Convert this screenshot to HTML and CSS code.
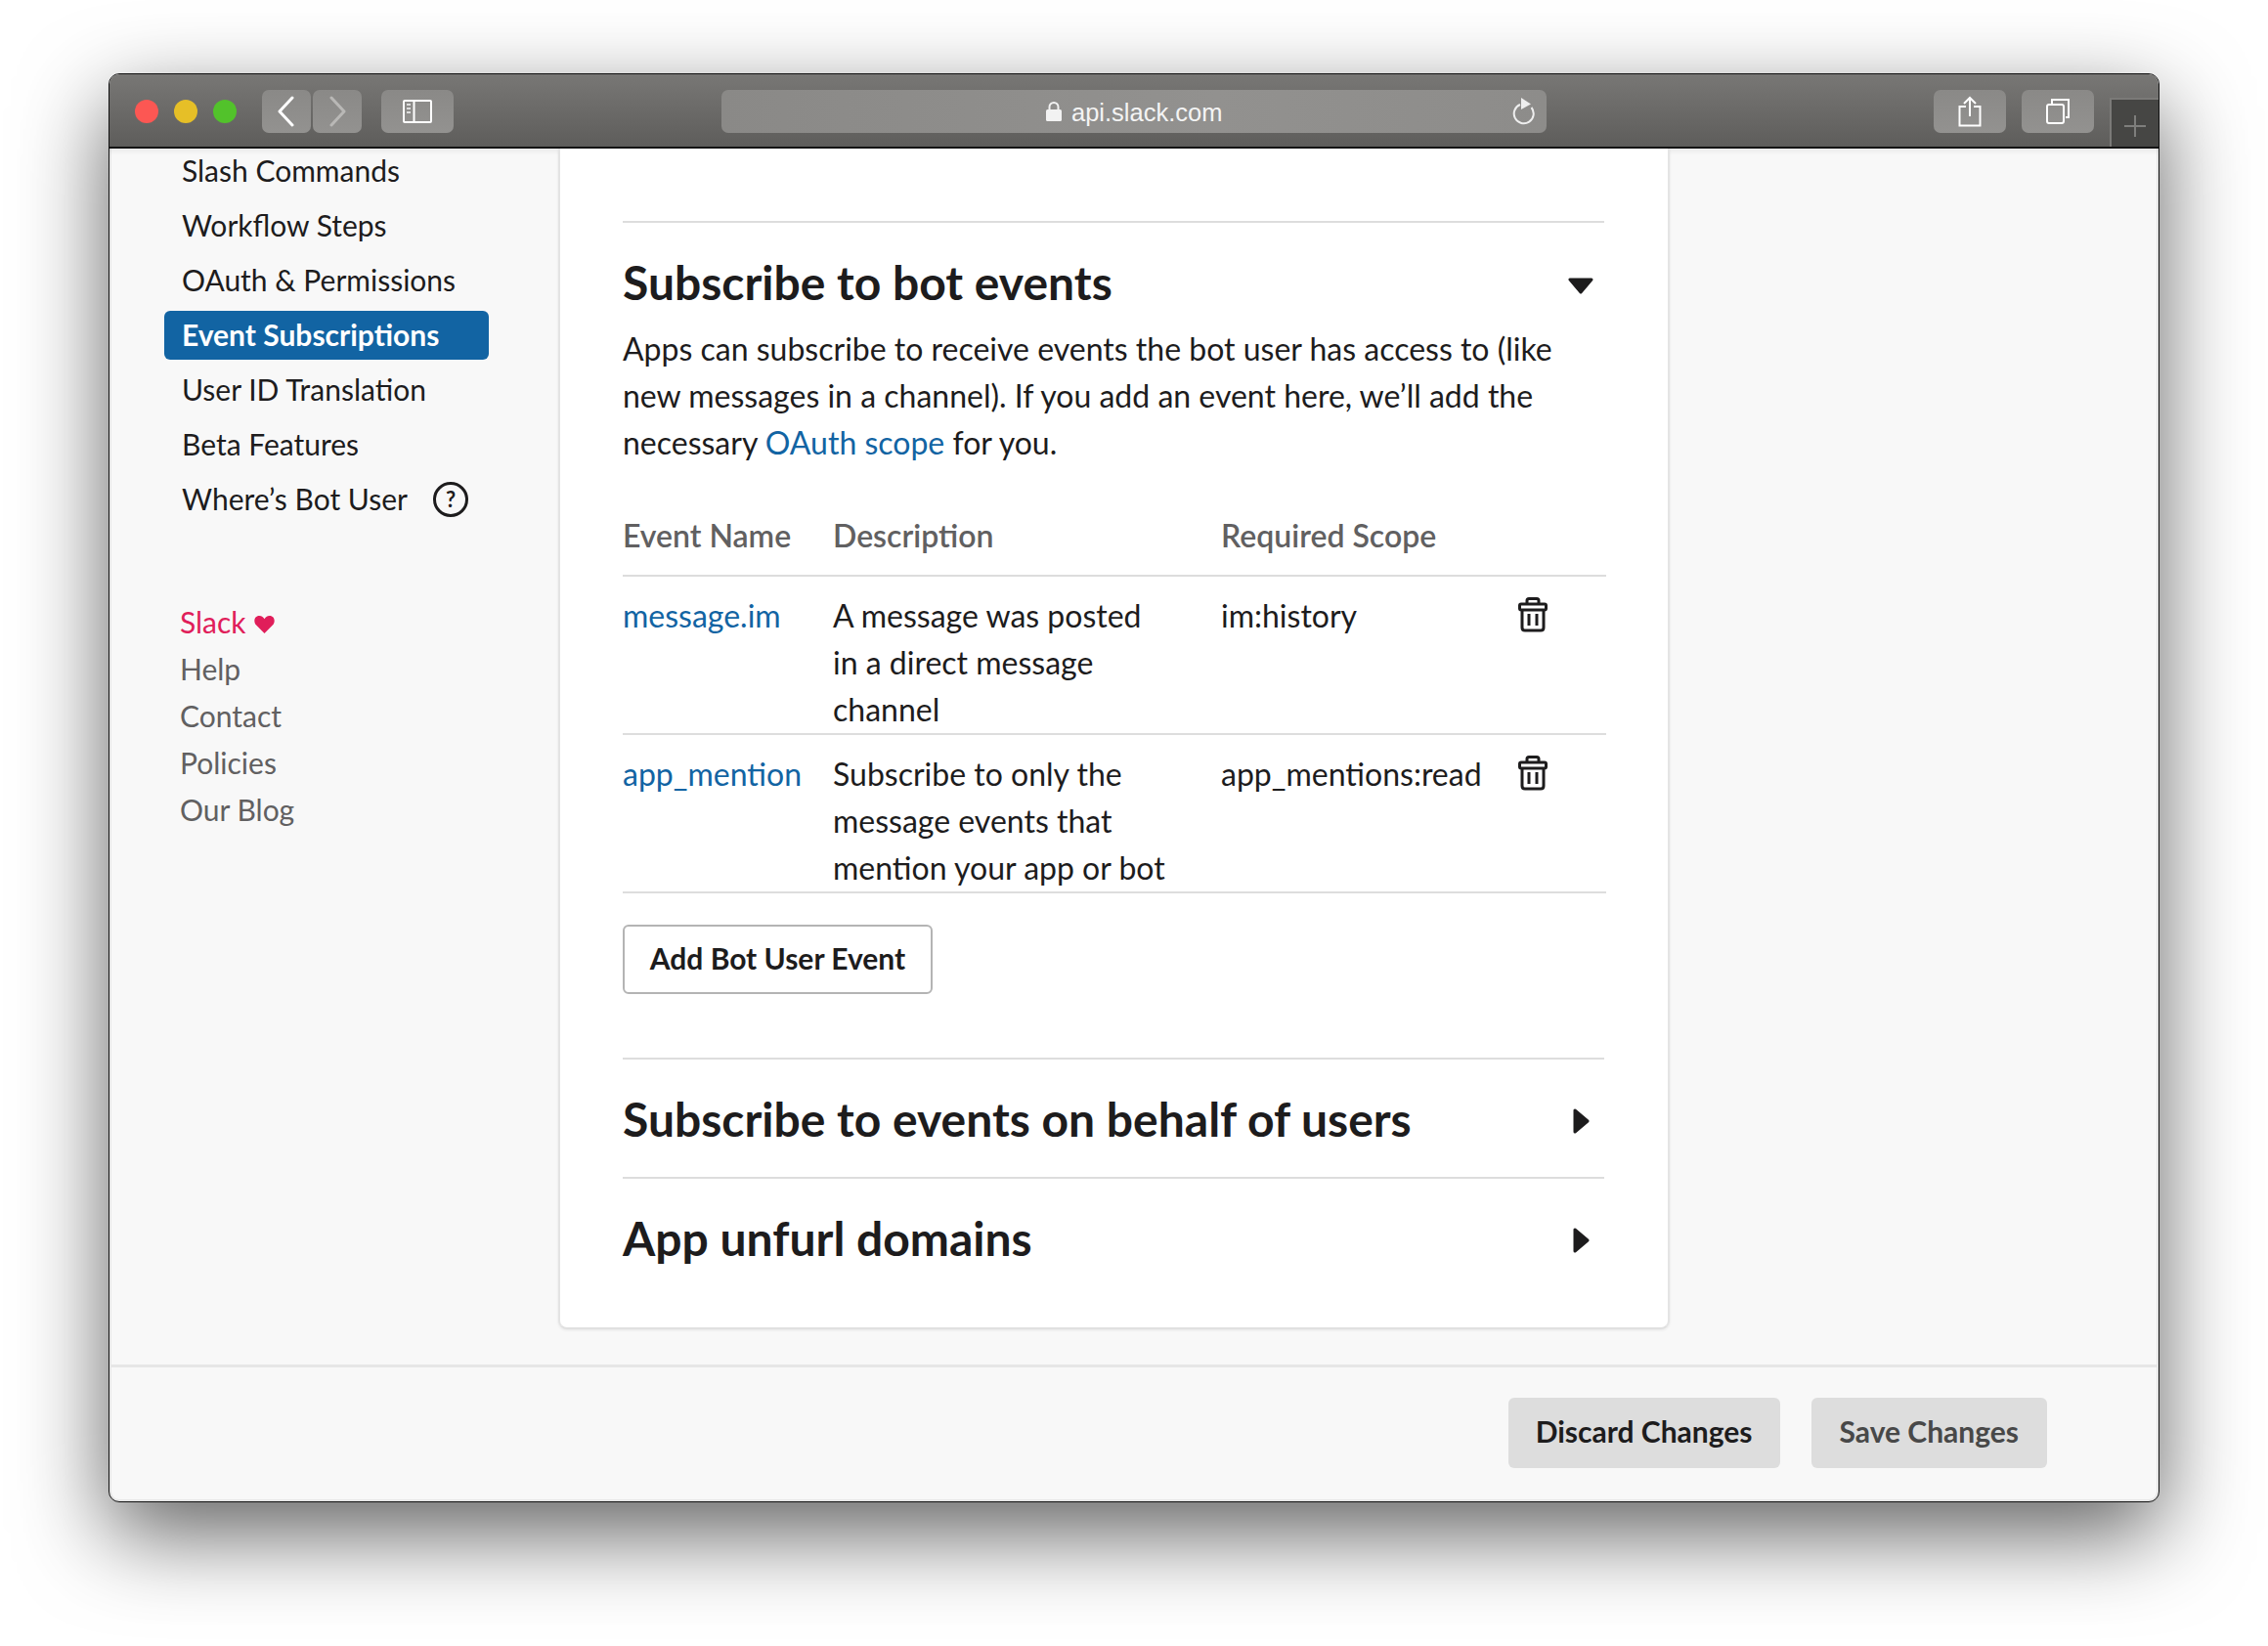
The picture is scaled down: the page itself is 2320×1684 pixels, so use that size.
FILE: index.html
```html
<!DOCTYPE html>
<html lang="en">
<head>
    <meta charset="UTF-8">
    <title>Event Subscriptions | Slack</title>
    <link rel="stylesheet" href="styles.css">
</head>
<body>
    <div class="window">
        <header class="titlebar">
            <div class="lights">
                <span class="light red"></span>
                <span class="light yellow"></span>
                <span class="light green"></span>
            </div>
            <div class="nav-btns">
                <div class="tool-btn nav-btn">
                    <svg width="20" height="32" viewBox="0 0 20 32"><path d="M16 2 3 16l13 14" fill="none" stroke="#fff" stroke-width="3" stroke-linecap="round" stroke-linejoin="round"/></svg>
                </div>
                <div class="tool-btn nav-btn">
                    <svg width="20" height="32" viewBox="0 0 20 32"><path d="M4 2l13 14L4 30" fill="none" stroke="#b9b8b6" stroke-width="3" stroke-linecap="round" stroke-linejoin="round"/></svg>
                </div>
            </div>
            <div class="tool-btn sidebar-btn">
                <svg width="30" height="24" viewBox="0 0 30 24"><rect x="1" y="1" width="28" height="22" rx="1" fill="none" stroke="#fff" stroke-width="2"/><path d="M11.500 1v22" stroke="#fff" stroke-width="2"/><path d="M4 5h4M4 9h4M4 13h4" stroke="#ddd" stroke-width="2"/></svg>
            </div>
            <div class="urlbar">
                <div class="url">
                    <svg class="lock" width="16" height="20" viewBox="0 0 16 20"><path d="M3.500 9V5.500a4.500 4.500 0 0 1 9 0V9" fill="none" stroke="#f2f2f2" stroke-width="2"/><rect y="8" width="16" height="12" rx="1.500" fill="#f2f2f2"/></svg>
                    <span class="host">api.slack.com</span>
                </div>
                <svg class="reload" width="24" height="28" viewBox="0 0 24 28"><path d="M9 7a10 10 0 1 0 11.500 3" fill="none" stroke="#eee" stroke-width="2"/><path d="M10 0l10 6.500-10 5.500z" fill="#eee"/></svg>
            </div>
            <div class="tool-btn wide-btn share-btn">
                <svg width="24" height="32" viewBox="0 0 24 32"><path d="M8 11H1.500v19.500h21V11H16" fill="none" stroke="#fff" stroke-width="2"/><path d="M12 21V2M6 8l6-6 6 6" fill="none" stroke="#fff" stroke-width="2"/></svg>
            </div>
            <div class="tool-btn wide-btn">
                <svg width="24" height="26" viewBox="0 0 24 26"><rect x="1" y="6" width="17" height="19" rx="2" fill="none" stroke="#fff" stroke-width="2"/><path d="M6 5V1h17v18h-3" fill="none" stroke="#fff" stroke-width="2"/></svg>
            </div>
            <div class="new-tab">
                <svg width="22" height="22" viewBox="0 0 22 22"><path d="M11 0v22M0 11h22" stroke="#7e7e7c" stroke-width="2"/></svg>
            </div>
        </header>

        <div class="page">
            <nav class="sidebar">
                <ul class="side-menu">
                    <li class="side-item">Slash Commands</li>
                    <li class="side-item">Workflow Steps</li>
                    <li class="side-item">OAuth &amp; Permissions</li>
                    <li class="side-item active">Event Subscriptions</li>
                    <li class="side-item">User ID Translation</li>
                    <li class="side-item">Beta Features</li>
                    <li class="side-item">Where’s Bot User <span class="help">?</span></li>
                </ul>
                <ul class="side-links">
                    <li class="slack-link">Slack
                        <svg class="heart" width="21" height="19" viewBox="0 0 20 18"><path d="M10 18 2 10C-1 7 0 1 5 1c2.500 0 4 1.500 5 3 1-1.500 2.500-3 5-3 5 0 6 6 3 9z" fill="#e01e5a"/></svg>
                    </li>
                    <li>Help</li>
                    <li>Contact</li>
                    <li>Policies</li>
                    <li>Our Blog</li>
                </ul>
            </nav>

            <main class="card">
                <section class="section open">
                    <div class="section-head">
                        <h2>Subscribe to bot events</h2>
                        <svg class="caret-down" width="26" height="17" viewBox="0 0 26 17"><path d="M2 2h22L13 15z" fill="#1d1c1d" stroke="#1d1c1d" stroke-width="3" stroke-linejoin="round"/></svg>
                    </div>
                    <p class="intro">Apps can subscribe to receive events the bot user has access to (like new messages in a channel). If you add an event here, we’ll add the necessary <a href="#">OAuth scope</a> for you.</p>
                    <table class="events">
                        <colgroup>
                            <col class="col-name">
                            <col class="col-desc">
                            <col class="col-scope">
                            <col class="col-del">
                        </colgroup>
                        <thead>
                            <tr>
                                <th>Event Name</th>
                                <th>Description</th>
                                <th>Required Scope</th>
                                <th></th>
                            </tr>
                        </thead>
                        <tbody>
                            <tr>
                                <td><a href="#">message.im</a></td>
                                <td>A message was posted in a direct message channel</td>
                                <td>im:history</td>
                                <td><svg class="trash" width="30" height="36" viewBox="0 0 30 36"><path d="M9 7V3.500C9 2 10 1.500 11 1.500h8c1 0 2 .5 2 2V7M4 13v18c0 2 1 3 3 3h16c2 0 3-1 3-3V13M3 7h24c1 0 1.500.5 1.500 1.500v3c0 1-.5 1.500-1.500 1.500H3c-1 0-1.500-.5-1.500-1.500v-3C1.500 7.500 2 7 3 7zM11 17v12M19 17v12" fill="none" stroke="#1d1c1d" stroke-width="3"/></svg></td>
                            </tr>
                            <tr>
                                <td><a href="#">app_mention</a></td>
                                <td>Subscribe to only the message events that mention your app or bot</td>
                                <td>app_mentions:read</td>
                                <td><svg class="trash" width="30" height="36" viewBox="0 0 30 36"><path d="M9 7V3.500C9 2 10 1.500 11 1.500h8c1 0 2 .5 2 2V7M4 13v18c0 2 1 3 3 3h16c2 0 3-1 3-3V13M3 7h24c1 0 1.500.5 1.500 1.500v3c0 1-.5 1.500-1.500 1.500H3c-1 0-1.500-.5-1.500-1.500v-3C1.500 7.500 2 7 3 7zM11 17v12M19 17v12" fill="none" stroke="#1d1c1d" stroke-width="3"/></svg></td>
                            </tr>
                        </tbody>
                    </table>
                    <button class="add-btn">Add Bot User Event</button>
                </section>
                <section class="section closed">
                    <div class="section-head">
                        <h2>Subscribe to events on behalf of users</h2>
                        <svg class="caret-right" width="17" height="26" viewBox="0 0 17 26"><path d="M2 2v22l13-11z" fill="#1d1c1d" stroke="#1d1c1d" stroke-width="3" stroke-linejoin="round"/></svg>
                    </div>
                </section>
                <section class="section closed">
                    <div class="section-head">
                        <h2>App unfurl domains</h2>
                        <svg class="caret-right" width="17" height="26" viewBox="0 0 17 26"><path d="M2 2v22l13-11z" fill="#1d1c1d" stroke="#1d1c1d" stroke-width="3" stroke-linejoin="round"/></svg>
                    </div>
                </section>
            </main>
        </div>

        <footer class="savebar">
            <button class="save-btn">Discard Changes</button>
            <button class="save-btn muted">Save Changes</button>
        </footer>
    </div>
</body>
</html>
```

FILE: styles.css
```css
* {
    box-sizing: border-box;
}
body {
    margin: 0;
    height: 1684px;
    overflow: hidden;
    background: #fff;
    font-family: Lato, "Open Sans", sans-serif;
    font-size: 32px;
    line-height: 48px;
    color: #1d1c1d;
}
a {
    color: #1264a3;
    text-decoration: none;
}
ul {
    list-style: none;
    margin: 0;
    padding: 0;
}

/* window */
.window {
    display: flex;
    flex-direction: column;
    width: 2098px;
    height: 1462px;
    margin: 75px 0 0 111px;
    background: #f8f8f8;
    border: 1px solid #111;
    border-radius: 11px;
    overflow: hidden;
    box-shadow: inset 0 0 0 2px #e6e6e6, 0 32px 90px rgba(0, 0, 0, 0.62);
}
.titlebar {
    display: flex;
    align-items: center;
    flex: none;
    height: 76px;
    padding: 2px 0 0 26px;
    background: linear-gradient(#787775, #5e5d5b);
    border-bottom: 2px solid #141414;
}
.lights {
    display: flex;
    gap: 16px;
    margin-right: 26px;
}
.light {
    width: 24px;
    height: 24px;
    border-radius: 50%;
}
.red { background: #fc5753; }
.yellow { background: #e6bf27; }
.green { background: #52c22b; }
.tool-btn {
    display: flex;
    align-items: center;
    justify-content: center;
    height: 44px;
    border-radius: 7px;
    background: linear-gradient(#8a8987, #939290);
}
.nav-btns {
    display: flex;
    gap: 2px;
    margin-right: 20px;
}
.nav-btn { width: 50px; }
.sidebar-btn { width: 74px; }
.wide-btn {
    width: 74px;
    margin-left: 16px;
}
.share-btn { margin-left: 396px; }
.urlbar {
    display: flex;
    align-items: center;
    justify-content: space-between;
    width: 844px;
    height: 44px;
    margin-left: 274px;
    padding: 0 12px 0 332px;
    border-radius: 7px;
    background: linear-gradient(90deg, #8a8987, #92918f 60%, #8d8c8a);
    color: #f4f4f4;
    font-family: "Liberation Sans", Arial, sans-serif;
    font-size: 25.5px;
    line-height: 44px;
}
.url {
    display: flex;
    align-items: center;
    gap: 10px;
}
.host {
    padding-top: 2px;
}
.new-tab {
    display: flex;
    align-items: center;
    justify-content: center;
    align-self: flex-end;
    width: 50px;
    height: 50px;
    margin-left: 16px;
    padding-top: 6px;
    background: #464644;
    border-top: 2px solid #7b7a78;
    border-left: 2px solid #7b7a78;
}

/* sidebar and card */
.page {
    display: flex;
    flex: none;
    height: 1244px;
    box-shadow: inset 0 8px 6px -6px rgba(0, 0, 0, 0.08);
}
.sidebar {
    flex: none;
    width: 459px;
    padding-left: 56px;
    margin-top: -2px;
    font-size: 30px;
}
.side-menu {
    display: flex;
    flex-direction: column;
    gap: 6px;
}
.side-item {
    width: 332px;
    height: 50px;
    padding-left: 18px;
    line-height: 49px;
    border-radius: 6px;
}
.active {
    background: #1264a3;
    color: #fff;
    font-weight: 700;
}
.help {
    display: inline-block;
    width: 36px;
    height: 36px;
    margin-left: 19px;
    border: 3px solid #1d1c1d;
    border-radius: 50%;
    font-size: 22px;
    font-weight: 700;
    line-height: 30px;
    text-align: center;
    vertical-align: 3px;
}
.side-links {
    margin-top: 76px;
    margin-left: 16px;
    color: #616061;
}
.slack-link {
    color: #e01e5a;
}
.heart {
    margin-left: 1px;
}
.card {
    flex: none;
    width: 1137px;
    height: 1208px;
    padding: 74px 65px 0 64px;
    background: #fff;
    border-left: 2px solid #e4e4e4;
    border-right: 2px solid #e4e4e4;
    border-bottom: 2px solid #e0e0e0;
    border-radius: 0 0 9px 9px;
    box-shadow: 0 1px 3px rgba(0, 0, 0, 0.08);
}
.section {
    border-top: 2px solid #ddd;
}
.section-head {
    display: flex;
    align-items: center;
    justify-content: space-between;
    padding-right: 12px;
}
h2 {
    margin: 0;
    font-size: 48px;
    font-weight: 700;
    line-height: 60px;
}
.open .section-head {
    padding-top: 31px;
}
.closed {
    height: 122px;
    padding-top: 31px;
}
.open {
    height: 856px;
}
.caret-down {
    margin-top: 6px;
    margin-right: -1px;
}
.caret-right {
    margin-top: 4px;
    margin-right: 3px;
}
.intro {
    margin: 14px 0 47px;
    width: 980px;
}

/* table */
.events {
    width: 1006px;
    border-collapse: collapse;
    table-layout: fixed;
}
.col-name { width: 215px; }
.col-desc { width: 397px; }
.col-scope { width: 304px; }
.events th {
    height: 48px;
    padding: 0 0 16px;
    text-align: left;
    font-weight: 600;
    color: #616061;
    border-bottom: 2px solid #ddd;
}
.events td {
    padding: 16px 52px 0 0;
    vertical-align: top;
    border-bottom: 2px solid #ddd;
}
.events td:nth-child(1),
.events td:nth-child(3),
.events td:nth-child(4) {
    padding-right: 0;
}
.trash {
    display: block;
    margin-top: 5px;
}
.add-btn {
    display: block;
    width: 317px;
    height: 71px;
    margin-top: 32px;
    padding: 0 0 3px;
    background: #fff;
    border: 2px solid #b4b4b4;
    border-radius: 6px;
    font-family: inherit;
    font-size: 30px;
    font-weight: 700;
    color: #1d1c1d;
    white-space: nowrap;
}

/* bottom bar */
.savebar {
    display: flex;
    align-items: center;
    justify-content: flex-end;
    gap: 32px;
    flex: 1;
    padding: 0 114px 3px 0;
    border-top: 3px solid #e6e6e6;
}
.save-btn {
    height: 72px;
    padding: 0 28px 4px;
    background: #ddd;
    border: none;
    border-radius: 6px;
    font-family: inherit;
    font-size: 30px;
    font-weight: 700;
    color: #1d1c1d;
}
.muted {
    padding: 0 29px 4px;
    color: #484848;
}
```
